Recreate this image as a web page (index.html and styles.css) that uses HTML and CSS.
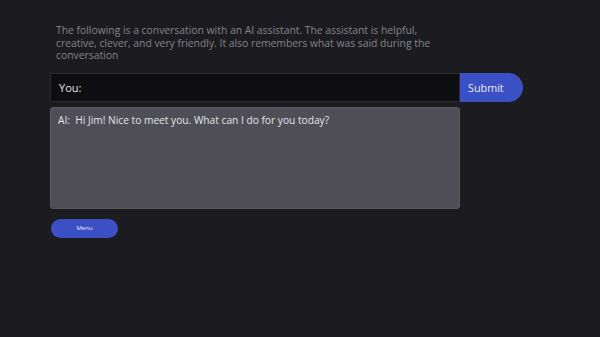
FILE: index.html
```html
<!DOCTYPE html>
<html>
<head>
<meta charset="utf-8">
<link rel="stylesheet" href="styles.css">
</head>
<body>
<main class="page">
  <p class="intro">The following is a conversation with an AI assistant. The assistant is helpful, creative, clever, and very friendly. It also remembers what was said during the conversation</p>
  <form class="ask">
    <div class="field">You:</div>
    <button type="button" class="submit">Submit</button>
  </form>
  <div class="log">AI:&nbsp; Hi Jim! Nice to meet you. What can I do for you today?</div>
  <button type="button" class="menu">Menu</button>
</main>
</body>
</html>
```
FILE: styles.css
```css
html, body {
  margin: 0;
  background: #1c1b1f;
  height: 100%;
}
body {
  font-family: "Open Sans", "DejaVu Sans", sans-serif;
}
.page {
  padding: 24px 0 0 50px;
  display: flex;
  flex-direction: column;
  align-items: flex-start;
}
.intro {
  margin: 0 0 0 6px;
  width: 400px;
  color: #85858a;
  font-size: 10.35px;
  line-height: 12.5px;
}
.ask {
  margin: 11px 0 0 0;
  display: flex;
  height: 29px;
}
.field {
  width: 410px;
  background: #0e0d10;
  border: 1px solid #2b2a2f;
  color: #e6e6ea;
  font-size: 11px;
  padding-left: 8px;
  display: flex;
  align-items: center;
  box-sizing: border-box;
}
.submit {
  width: 63px;
  border: none;
  background: #3b50c4;
  color: #e8eaf8;
  border-radius: 0 15px 15px 0;
  font-family: inherit;
  font-size: 10.8px;
  text-align: left;
  padding: 0 0 0 8px;
}
.log {
  margin-top: 5px;
  width: 410px;
  height: 102px;
  box-sizing: border-box;
  background: #4f4e57;
  border: 1px solid #5a5962;
  border-radius: 3px;
  color: #e4e4e8;
  font-size: 10.2px;
  padding: 5px 7px;
}
.menu {
  margin: 10px 0 0 1px;
  width: 67px;
  height: 19px;
  border: none;
  border-radius: 10px;
  background: #3b50c4;
  color: #e8eaf8;
  font-family: inherit;
  font-size: 6px;
  padding: 0;
}
```
